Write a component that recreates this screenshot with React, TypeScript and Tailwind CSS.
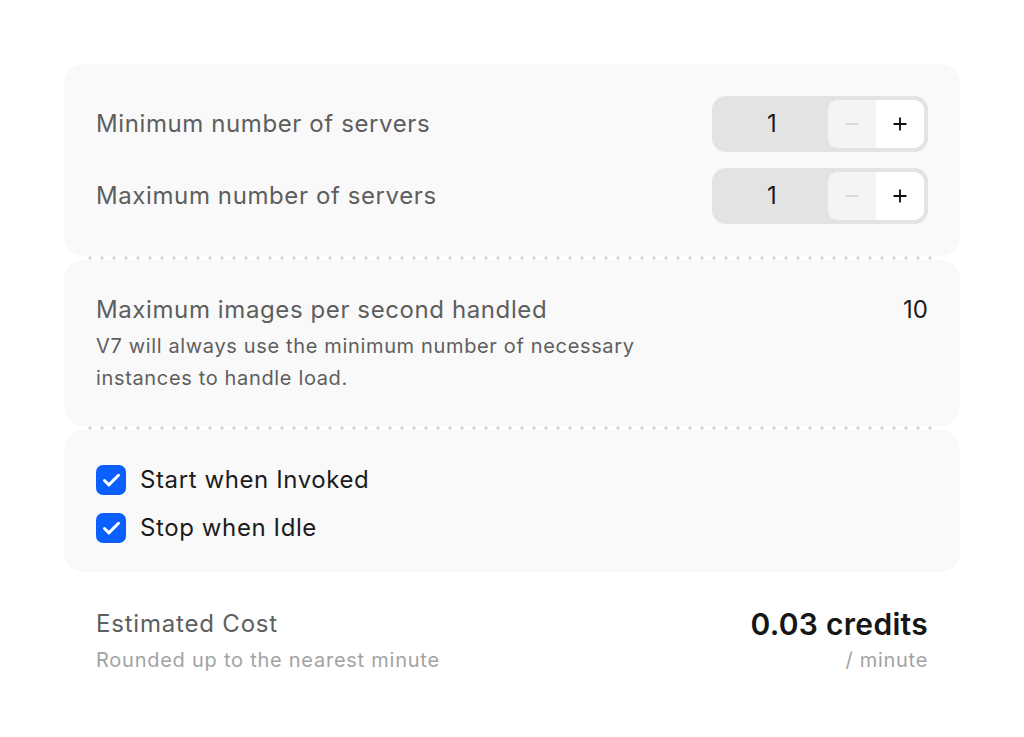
import { Check, Minus, Plus } from 'lucide-react';

const Stepper = ({ value }: { value: number }) => {
  return (
    <div className="flex items-center h-[56px] w-[216px] rounded-[14px] bg-[#e3e3e3] p-[4px]">
      <div className="flex-1 text-center text-[24px] text-[#1c1c1c]">{value}</div>
      <div className="flex h-full w-[96px] rounded-[10px] overflow-hidden bg-white">
        <button className="flex-1 flex items-center justify-center bg-[#f4f4f6] text-[#d2d2d4]">
          <Minus size={20} strokeWidth={2} />
        </button>
        <button className="flex-1 flex items-center justify-center bg-white text-[#111]">
          <Plus size={20} strokeWidth={2.2} />
        </button>
      </div>
    </div>
  );
};

const Separator = () => (
  <div className="h-[4px] mx-5 bg-[radial-gradient(circle,#dadada_1.5px,transparent_1.8px)] bg-[length:12px_4px] bg-repeat-x" />
);

const CheckRow = ({ label }: { label: string }) => (
  <label className="flex items-center gap-[14px] h-[40px]">
    <span className="w-[30px] h-[30px] rounded-[7px] bg-[#0b5fff] flex items-center justify-center text-white">
      <Check size={21} strokeWidth={3.4} />
    </span>
    <span className="text-[24px] tracking-[0.6px] text-[#1c1c1c]">{label}</span>
  </label>
);

export default function App() {
  return (
    <main className="bg-white min-h-screen pt-16 px-16 font-['Inter',sans-serif]">
      <div className="w-[896px]">
        {/* Servers */}
        <section className="rounded-[20px] bg-[#f9f9f9] px-8 py-8 flex flex-col gap-4">
          {[
            { label: 'Minimum number of servers', value: 1 },
            { label: 'Maximum number of servers', value: 1 },
          ].map((row, idx) => (
            <div key={idx} className="flex items-center justify-between">
              <span className="text-[24px] tracking-[0.6px] text-[#5e5e5e]">{row.label}</span>
              <Stepper value={row.value} />
            </div>
          ))}
        </section>

        <Separator />

        {/* Throughput */}
        <section className="rounded-[20px] bg-[#f9f9f9] px-8 pt-[30px] pb-8">
          <div className="flex items-center justify-between">
            <span className="text-[24px] leading-[40px] tracking-[0.6px] text-[#5e5e5e]">Maximum images per second handled</span>
            <span className="text-[24px] leading-[40px] text-[#1c1c1c]">10</span>
          </div>
          <p className="m-0 max-w-[600px] text-[20px] leading-[32px] tracking-[0.65px] text-[#5e5e5e]">
            V7 will always use the minimum number of necessary instances to handle load.
          </p>
        </section>

        <Separator />

        {/* Lifecycle */}
        <section className="rounded-[20px] bg-[#f9f9f9] px-8 pt-[30px] pb-6 flex flex-col gap-2">
          <CheckRow label="Start when Invoked" />
          <CheckRow label="Stop when Idle" />
        </section>

        {/* Cost */}
        <section className="px-8 pt-[34px] flex justify-between items-start">
          <div className="flex flex-col">
            <span className="text-[24px] leading-[36px] tracking-[0.8px] text-[#5e5e5e]">Estimated Cost</span>
            <span className="text-[20px] leading-[36px] tracking-[0.75px] text-[#a3a3a3]">Rounded up to the nearest minute</span>
          </div>
          <div className="flex flex-col items-end">
            <span className="text-[30px] leading-[36px] font-semibold tracking-[0.3px] text-[#161616]">0.03 credits</span>
            <span className="text-[20px] leading-[36px] tracking-[0.7px] text-[#a3a3a3]">/ minute</span>
          </div>
        </section>
      </div>
    </main>
  );
}
